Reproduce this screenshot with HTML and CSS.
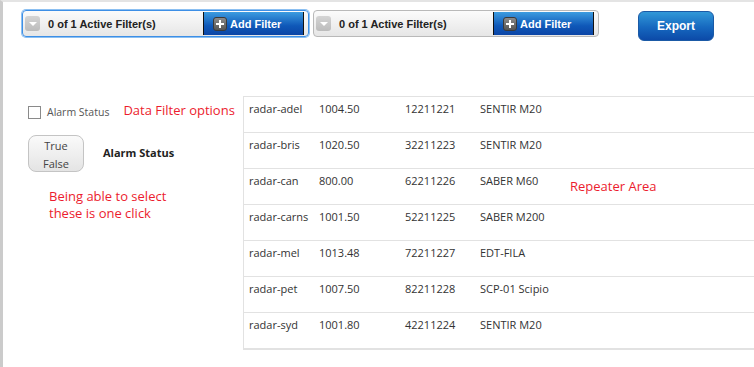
FILE: index.html
```html
<!DOCTYPE html>
<html lang="en">
<head>
  <meta charset="UTF-8">
  <title>Radar filters</title>
  <link rel="stylesheet" href="styles.css">
</head>

<body>
  <div class="toolbar">
    <div class="filter-box focused">
      <span class="filter-drop"></span>
      <span class="filter-count">0 of 1 Active Filter(s)</span>
      <button class="filter-add"><span class="plus-icon"></span>Add Filter</button>
    </div>
    <div class="filter-box">
      <span class="filter-drop"></span>
      <span class="filter-count">0 of 1 Active Filter(s)</span>
      <button class="filter-add"><span class="plus-icon"></span>Add Filter</button>
    </div>
    <button class="export-btn">Export</button>
  </div>

  <div class="main">
    <div class="side-panel">
      <div class="check-row">
        <span class="check-box"></span>
        <span class="check-label">Alarm Status</span>
        <span class="note">Data Filter options</span>
      </div>
      <div class="toggle-row">
        <div class="toggle">
          <span>True</span>
          <span>False</span>
        </div>
        <span class="toggle-label">Alarm Status</span>
      </div>
      <div class="note note-block">Being able to select<br>these is one click</div>
    </div>

    <div class="repeater">
      <div class="rep-row"><span>radar-adel</span><span>1004.50</span><span>12211221</span><span>SENTIR M20</span></div>
      <div class="rep-row"><span>radar-bris</span><span>1020.50</span><span>32211223</span><span>SENTIR M20</span></div>
      <div class="rep-row"><span>radar-can</span><span>800.00</span><span>62211226</span><span>SABER M60</span><span class="note rep-note">Repeater Area</span></div>
      <div class="rep-row"><span>radar-carns</span><span>1001.50</span><span>52211225</span><span>SABER M200</span></div>
      <div class="rep-row"><span>radar-mel</span><span>1013.48</span><span>72211227</span><span>EDT-FILA</span></div>
      <div class="rep-row"><span>radar-pet</span><span>1007.50</span><span>82211228</span><span>SCP-01 Scipio</span></div>
      <div class="rep-row"><span>radar-syd</span><span>1001.80</span><span>42211224</span><span>SENTIR M20</span></div>
    </div>
  </div>
</body>
</html>
```

FILE: styles.css
```css
html {
  font-family: 'Open Sans', 'Noto Sans', sans-serif;
  font-size: 11px;
  background: #fff;
}
*,
*::before,
*::after {
  box-sizing: border-box;
}
body {
  margin: 0;
  height: 100vh;
  border-left: 3px solid #cbcbcb;
  border-top: 2px solid #e4e4e4;
  color: #333;
}

/* top bar */
.toolbar {
  display: flex;
  align-items: flex-start;
  height: 39px;
  padding: 8px 0 0 19px;
}
.filter-box {
  display: flex;
  align-items: center;
  width: 287px;
  height: 27px;
  margin-right: 4px;
  padding: 1px 4px 1px 1px;
  border: 1px solid #b9b9b9;
  border-radius: 4px;
  background: linear-gradient(#fbfbfb, #e6e6e6);
}
.filter-box.focused {
  border-color: #3d8fe6;
  box-shadow: 0 0 0 1px #8cc0f2;
}
.filter-box + .filter-box {
  width: 286px;
}
.filter-drop {
  position: relative;
  width: 15px;
  height: 15px;
  margin-left: 1px;
  border-radius: 3px;
  background: linear-gradient(#d4d4d4, #bcbcbc);
}
.filter-drop::after {
  content: '';
  position: absolute;
  left: 4px;
  top: 6px;
  border-left: 4px solid transparent;
  border-right: 4px solid transparent;
  border-top: 4px solid #fff;
}
.filter-count,
.filter-add,
.export-btn {
  font-family: 'Liberation Sans', Arial, sans-serif;
  font-weight: bold;
}
.filter-count {
  flex: 1;
  margin-left: 8px;
  font-size: 11px;
  color: #222;
}
.filter-add {
  display: flex;
  align-items: center;
  width: 101px;
  height: 100%;
  padding: 0 0 0 9px;
  border: 0;
  border-left: 1px solid #111;
  border-right: 1px solid #111;
  background: linear-gradient(#3c9ce0, #0f58b8 60%, #0b45a6);
  color: #fff;
  font-size: 11px;
}
.plus-icon {
  position: relative;
  width: 14px;
  height: 14px;
  margin-right: 3px;
  border: 1px solid #3a3a3a;
  border-radius: 3px;
  background: linear-gradient(#8a8a8a, #555);
}
.plus-icon::before,
.plus-icon::after {
  content: '';
  position: absolute;
  background: #fff;
}
.plus-icon::before {
  left: 2px;
  top: 5px;
  width: 8px;
  height: 2px;
}
.plus-icon::after {
  left: 5px;
  top: 2px;
  width: 2px;
  height: 8px;
}
.export-btn {
  width: 76px;
  height: 30px;
  margin: 1px 0 0 35px;
  border: 1px solid #1b5aa6;
  border-radius: 6px;
  background: linear-gradient(#3198d8, #1668bf 55%, #0c4aa8);
  color: #fff;
  font-size: 12px;
}

/* main area */
.main {
  display: flex;
  margin-top: 55px;
}
.side-panel {
  width: 240px;
  padding: 9px 0 0 25px;
}
.check-row {
  display: flex;
  align-items: center;
}
.check-box {
  width: 13px;
  height: 13px;
  border: 1px solid #8a8a8a;
  background: #fff;
}
.check-label {
  margin-left: 6px;
  font-size: 10.5px;
  color: #555;
}
.note {
  color: #ec1c2e;
  font-size: 13px;
}
.check-row .note {
  margin-left: 14px;
  margin-top: -4px;
}
.toggle-row {
  display: flex;
  align-items: center;
  margin-top: 16px;
}
.toggle {
  display: flex;
  flex-direction: column;
  align-items: center;
  width: 56px;
  height: 37px;
  padding-top: 1px;
  border: 1px solid #c4c4c4;
  border-radius: 8px;
  background: linear-gradient(#fafafa, #e4e4e4);
  color: #444;
  line-height: 18px;
}
.toggle-label {
  margin-left: 19px;
  margin-top: -3px;
  font-weight: bold;
  color: #222;
}
.note-block {
  margin: 16px 0 0 21px;
  line-height: 17px;
}

/* repeater */
.repeater {
  flex: 1;
  border-left: 1px solid #e2e2e2;
  border-top: 1px solid #e2e2e2;
}
.rep-row {
  display: grid;
  grid-template-columns: 70px 86px 75px 90px auto;
  height: 36px;
  padding: 4px 0 0 5px;
  border-bottom: 1px solid #e2e2e2;
  line-height: 15px;
}
.rep-row:last-child {
  height: 37px;
  border-bottom-width: 2px;
}
.rep-note {
  align-self: center;
  margin-top: -4px;
}
```
